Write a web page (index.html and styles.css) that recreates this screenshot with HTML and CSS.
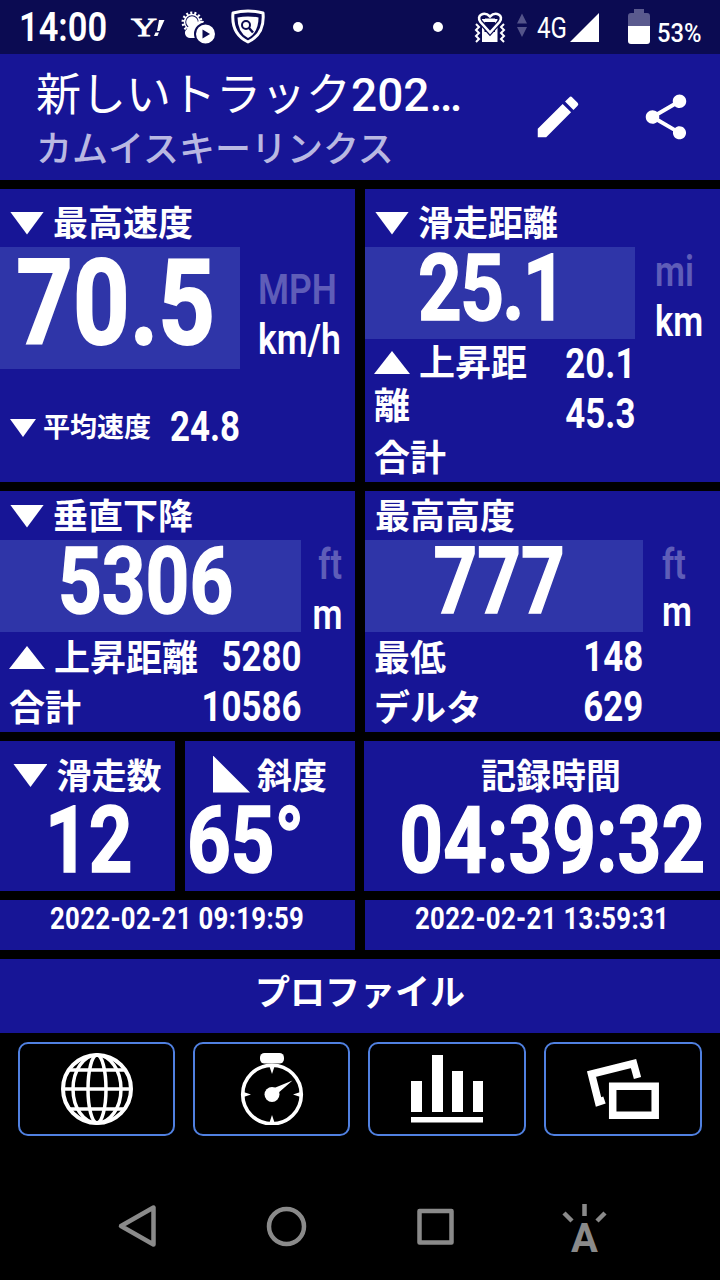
FILE: index.html
```html
<!DOCTYPE html>
<html lang="ja">
<head>
  <meta charset="UTF-8">
  <meta name="viewport" content="width=device-width, initial-scale=1.0">
  <title>カムイスキーリンクス</title>
  <link rel="stylesheet" href="styles.css">
</head>
<body>
  <div class="status-bar">
    <span class="clock">14:00</span>
    <svg class="notifications" width="180" height="54" viewBox="130 0 180 54">
      <!-- mail -->
      <text class="yahoo" x="131" y="36" textLength="26" lengthAdjust="spacingAndGlyphs">Y</text>
      <path d="M159 20h5.500l-5 11h-2.500zM155.500 32.500h3.500l-1.500 3.500h-3.500z" fill="#fff"/>
      <!-- weather -->
      <circle cx="192" cy="22" r="9" fill="none" stroke="#fff" stroke-width="3" stroke-dasharray="2 2.040"/>
      <circle cx="192" cy="22" r="7.500" fill="none" stroke="#fff" stroke-width="1.500"/>
      <circle cx="192" cy="22" r="5.800" fill="#fff"/>
      <path d="M190 38a5 5 0 0 1-3-9 7 7 0 0 1 8-5 9 9 0 0 1 9-3l-6 17z" fill="#fff"/>
      <circle cx="205.500" cy="34" r="10.500" fill="#fff" stroke="#0b0b52" stroke-width="2"/>
      <path d="M202.500 29.500v9l7.500-4.500z" fill="#0b0b52"/>
      <!-- shield -->
      <path d="M233 13q15-4 30 0q2 21-15 29q-17-8-15-29z" fill="none" stroke="#fff" stroke-width="3" stroke-linejoin="round"/>
      <path d="M237.500 17.500q10.500-2 21 0q0 15-10.500 20.500q-10.500-5.500-10.500-20.500z" fill="#fff"/>
      <circle cx="246" cy="25" r="4" fill="none" stroke="#0b0b52" stroke-width="2"/>
      <path d="M249 28l4 4.500" stroke="#0b0b52" stroke-width="2.500"/>
      <circle cx="298" cy="27" r="5" fill="#fff"/>
    </svg>
    <svg class="signals" width="100" height="54" viewBox="430 0 100 54">
      <circle cx="438" cy="27" r="5" fill="#fff"/>
      <!-- vibrate -->
      <path d="M482 19h15.500v23H482z" fill="#fff"/>
      <path d="M484.500 22h10.500v10h-10.500z" fill="#0b0b52"/>
      <path d="M490 32.500l-9.500-10.500c-5-7 4-11 9.500-5.500c5.500-5.500 14.500-1.500 9.500 5.500z" fill="none" stroke="#0b0b52" stroke-width="5"/>
      <path d="M490 32.500l-9.500-10.500c-5-7 4-11 9.500-5.500c5.500-5.500 14.500-1.500 9.500 5.500z" fill="none" stroke="#fff" stroke-width="2.600"/>
      <path d="M485 19.500h10" stroke="#fff" stroke-width="2"/>
      <path d="M476 24l3 3-3 3 3 3-3 3 3 3-3 3M504 24l-3 3 3 3-3 3 3 3-3 3 3 3" fill="none" stroke="#fff" stroke-width="2"/>
      <path d="M517 23.500l5-10 5 10zM517 27l5 10 5-10z" fill="#54548a"/>
    </svg>
    <span class="network">4G</span>
    <svg class="cell" width="29" height="29" viewBox="0 0 29 29"><path d="M0 29L29 0v29z" fill="#fff"/></svg>
    <svg class="battery" width="22" height="36" viewBox="0 0 22 36">
      <path d="M6 0h10v4h3q3 0 3 3v10H0V7q0-3 3-3h3z" fill="#5a5a8e"/>
      <path d="M0 17h22v15q0 3-3 3H3q-3 0-3-3z" fill="#fff"/>
    </svg>
    <span class="percent">53%</span>
  </div>

  <header class="header">
    <div class="titles">
      <h1>新しいトラック<span>202…</span></h1>
      <p>カムイスキーリンクス</p>
    </div>
    <svg class="action" viewBox="0 0 24 24"><path d="M3 17.250V21h3.750L17.810 9.940l-3.750-3.750L3 17.250zM20.710 7.040a1 1 0 0 0 0-1.410l-2.340-2.340a1 1 0 0 0-1.410 0l-1.830 1.830 3.750 3.750 1.830-1.830z"/></svg>
    <svg class="action" viewBox="0 0 24 24"><path d="M18 16.080c-.76 0-1.440.3-1.960.77L8.910 12.700c.05-.23.09-.46.09-.7s-.04-.47-.09-.7l7.050-4.110c.54.5 1.250.81 2.040.81 1.660 0 3-1.340 3-3s-1.340-3-3-3-3 1.340-3 3c0 .24.04.47.09.7L8.040 9.810C7.500 9.310 6.790 9 6 9c-1.660 0-3 1.340-3 3s1.340 3 3 3c.79 0 1.500-.31 2.040-.81l7.120 4.160c-.05.21-.08.43-.08.65 0 1.610 1.310 2.920 2.920 2.920s2.920-1.310 2.920-2.920-1.310-2.920-2.920-2.920z"/></svg>
  </header>

  <main class="stats">
    <section class="card speed">
      <h2 class="label"><i class="down"></i>最高速度</h2>
      <div class="main-row">
        <div class="value"><span class="num">70.5</span></div>
        <div class="units"><span class="off">MPH</span><span>km/h</span></div>
      </div>
      <div class="average">
        <span class="small-label"><i class="down small"></i>平均速度</span>
        <span class="num">24.8</span>
      </div>
    </section>

    <section class="card distance">
      <h2 class="label"><i class="down"></i>滑走距離</h2>
      <div class="main-row">
        <div class="value"><span class="num">25.1</span></div>
        <div class="units"><span class="off">mi</span><span>km</span></div>
      </div>
      <div class="details">
        <div class="names">
          <p class="wrapped"><i class="up"></i>上昇距離</p>
          <p class="total">合計</p>
        </div>
        <div class="amounts"><span class="num">20.1</span><span class="num">45.3</span></div>
      </div>
    </section>

    <section class="card vertical">
      <h2 class="label"><i class="down"></i>垂直下降</h2>
      <div class="main-row">
        <div class="value"><span class="num">5306</span></div>
        <div class="units"><span class="off">ft</span><span>m</span></div>
      </div>
      <div class="details">
        <div class="names"><p><i class="up"></i>上昇距離</p><p>合計</p></div>
        <div class="amounts"><span class="num">5280</span><span class="num">10586</span></div>
      </div>
    </section>

    <section class="card altitude">
      <h2 class="label">最高高度</h2>
      <div class="main-row">
        <div class="value"><span class="num">777</span></div>
        <div class="units"><span class="off">ft</span><span>m</span></div>
      </div>
      <div class="details">
        <div class="names"><p>最低</p><p>デルタ</p></div>
        <div class="amounts"><span class="num">148</span><span class="num">629</span></div>
      </div>
    </section>
  </main>

  <div class="summary">
    <section class="card runs">
      <h2 class="label"><i class="down"></i>滑走数</h2>
      <div class="value"><span class="num">12</span></div>
    </section>
    <section class="card slope">
      <h2 class="label"><i class="incline"></i>斜度</h2>
      <div class="value"><span class="num">65°</span></div>
    </section>
    <section class="card time">
      <h2 class="label">記録時間</h2>
      <div class="value"><span class="num">04:39:32</span></div>
    </section>
  </div>

  <div class="dates">
    <div class="card date"><span class="num">2022-02-21 09:19:59</span></div>
    <div class="card date"><span class="num">2022-02-21 13:59:31</span></div>
  </div>

  <div class="card profile">プロファイル</div>

  <nav class="tools">
    <button>
      <svg width="72" height="72" viewBox="0 0 72 72" fill="none" stroke="#fff" stroke-width="4">
        <circle cx="36" cy="36" r="34"/>
        <ellipse cx="36" cy="36" rx="24" ry="34" stroke-width="3.500"/>
        <ellipse cx="36" cy="36" rx="9" ry="34" stroke-width="3.500"/>
        <path d="M2 36h68M8 17h56M8 56h56" stroke-width="3.500"/>
      </svg>
    </button>
    <button>
      <svg width="64" height="72" viewBox="0 0 64 72">
        <rect x="20" y="0" width="24" height="10.500" rx="4.500" fill="#fff"/>
        <circle cx="32" cy="41.500" r="29.300" fill="none" stroke="#fff" stroke-width="3.600"/>
        <circle cx="32" cy="41.500" r="7.500" fill="#fff"/>
        <path d="M33 35.500L52.500 27.500 37 41zM29 12h6l-3 9zM29 71h6l-3-9zM2 38.500v6l9-3zM62 38.500v6l-9-3z" fill="#fff"/>
      </svg>
    </button>
    <button>
      <svg width="72" height="68" viewBox="0 0 72 68" fill="#fff">
        <path d="M0 26h11v31H0zM21 0h11v57H21zM41 16h11v41H41zM62 26h10v31H62zM0 62h72v5.500H0z"/>
      </svg>
    </button>
    <button>
      <svg width="72" height="62" viewBox="0 0 72 62" fill="none" stroke="#fff" stroke-width="7.500">
        <path d="M50.500 20L46.500 5.500 4.500 16l7 28 6-2"/>
        <path d="M25.700 28.200h42.500v29H25.700z"/>
      </svg>
    </button>
  </nav>

  <footer class="nav-bar">
    <svg width="520" height="70" viewBox="100 1196 520 70" fill="none" stroke="#8a8a8a" stroke-width="4.500" stroke-linejoin="round">
      <path d="M153.500 1207.500v37l-32.500-18.500z"/>
      <circle cx="286.500" cy="1226.500" r="17.500"/>
      <path d="M419.500 1211h32v31.500h-32z"/>
      <path d="M584.500 1204v12M564 1213l8 8M605 1213l-8 8"/>
      <text class="nav-letter" x="584.500" y="1252">A</text>
    </svg>
  </footer>
</body>
</html>
```
FILE: styles.css
```css
* {
  box-sizing: border-box;
  margin: 0;
  padding: 0;
}

body {
  width: 720px;
  height: 1280px;
  overflow: hidden;
  background: #000;
  color: #fff;
  font-family: Roboto, "Noto Sans CJK JP", sans-serif;
}

/* status bar */
.status-bar {
  display: flex;
  height: 54px;
  background: #0b0b52;
}

.status-bar span,
.status-bar svg {
  flex: none;
}

.clock {
  width: 111px;
  margin-left: 19px;
  font-size: 41px;
  line-height: 54px;
  font-weight: 600;
  transform: scaleX(0.84);
  transform-origin: left;
}

.yahoo {
  font-family: "Liberation Serif", serif;
  font-size: 26px;
  font-weight: 400;
  fill: #fff;
  stroke: #fff;
  stroke-width: 0.8px;
}

.signals {
  margin-left: 120px;
}

.network {
  width: 33px;
  margin-left: 7px;
  font-size: 29px;
  line-height: 56px;
  transform: scaleX(0.83);
  transform-origin: left;
}

.cell {
  margin-top: 13px;
}

.battery {
  margin: 9px 7px 0 29px;
}

.percent {
  font-size: 25px;
  line-height: 67px;
  font-weight: 500;
  transform: scaleX(0.95);
  transform-origin: left;
}

/* header */
.header {
  display: flex;
  align-items: center;
  height: 126px;
  background: #171596;
}

.titles {
  width: 531px;
  padding-left: 36px;
}

.titles h1 {
  height: 74px;
  padding-top: 4px;
  font-size: 45px;
  line-height: 72px;
  font-weight: 400;
  white-space: nowrap;
}

.titles h1 span {
  font-size: 46px;
  font-weight: 500;
}

.titles p {
  height: 50px;
  font-size: 36px;
  line-height: 42px;
  font-weight: 500;
  color: #b9b8e2;
}

.action {
  width: 54px;
  height: 54px;
  fill: #fff;
}

.action + .action {
  margin-left: 54px;
}

/* cards */
.stats {
  display: grid;
  grid-template-columns: 355px 355px;
  grid-template-rows: 293px 241px;
  gap: 9px 10px;
  margin-top: 9px;
}

.card {
  background: #171596;
}

.label {
  display: flex;
  align-items: center;
  height: 49px;
  padding-top: 4px;
  padding-left: 10px;
  font-size: 35px;
  line-height: 45px;
  font-weight: 700;
}

.speed .label,
.distance .label {
  height: 58px;
  padding-top: 13px;
}

.down,
.up,
.incline {
  display: inline-block;
  flex: none;
  width: 34px;
  height: 23px;
  margin-right: 9px;
  background: #fff;
  clip-path: polygon(0 0, 100% 0, 50% 100%);
}

.label .down {
  margin-top: -3px;
}

.up {
  width: 36px;
  vertical-align: 2px;
  clip-path: polygon(50% 0, 100% 100%, 0 100%);
}

.small {
  width: 26px;
  height: 18px;
  margin-right: 7px;
}

.incline {
  width: 37px;
  height: 37px;
  margin-top: -6px;
  margin-right: 7px;
  clip-path: polygon(0 0, 100% 100%, 0 100%);
}

.num {
  display: inline-block;
  font-weight: 700;
  white-space: nowrap;
  transform: scaleX(0.83);
}

.main-row {
  display: flex;
  height: 92px;
}

.speed .main-row {
  height: 122px;
}

.value {
  display: flex;
  flex: none;
  justify-content: center;
  width: 301px;
  height: 92px;
  padding-right: 9px;
  background: #2f35a8;
  font-size: 92px;
  line-height: 84px;
  -webkit-text-stroke: 1.5px #fff;
}

.speed .value {
  width: 240px;
  height: 122px;
  padding-right: 9px;
  font-size: 119px;
  line-height: 113px;
  -webkit-text-stroke-width: 2px;
}

.distance .value {
  width: 270px;
  padding-right: 16px;
  letter-spacing: -2px;
}

.altitude .value {
  width: 278px;
}

.units {
  display: flex;
  flex-direction: column;
  padding-left: 20px;
  font-size: 42px;
  line-height: 50px;
  font-weight: 600;
}

.units span {
  transform: scaleX(0.82);
  transform-origin: left;
}

.units .off {
  color: #5f5db8;
}

.speed .units {
  padding-top: 18px;
  padding-left: 18px;
}

.speed .units span {
  transform: scaleX(0.845);
}

.vertical .units {
  width: 41px;
  padding-left: 0;
  align-items: flex-end;
}

.vertical .units span {
  transform-origin: right;
}

.altitude .units {
  padding-top: 1px;
  padding-left: 19px;
  line-height: 47px;
}

.average {
  display: flex;
  align-items: center;
  width: 240px;
  margin-top: 32px;
  padding-left: 10px;
  font-size: 42px;
  line-height: 50px;
}

.small-label {
  display: flex;
  flex: none;
  align-items: center;
  padding-top: 2px;
  font-size: 27px;
  font-weight: 700;
}

.average .num {
  margin-left: 19px;
  transform-origin: left;
}

.details {
  display: flex;
  justify-content: space-between;
  width: 301px;
  padding-left: 9px;
  font-size: 36px;
  line-height: 50px;
  font-weight: 700;
}

.distance .details {
  width: 270px;
}

.altitude .details {
  width: 278px;
}

.names {
  padding-top: 2px;
}

.distance .names {
  width: 160px;
}

.wrapped {
  padding-top: 2px;
  line-height: 43px;
  word-break: break-all;
}

.total {
  line-height: 60px;
}

.amounts {
  display: flex;
  flex: 1;
  flex-direction: column;
  align-items: flex-end;
  width: 0;
  font-size: 42px;
}

.amounts .num {
  transform-origin: right;
}

/* runs, slope and time */
.summary {
  display: flex;
  height: 150px;
  margin-top: 9px;
}

.summary .label {
  justify-content: center;
  height: 58px;
  padding: 14px 0 0;
}

.summary .value {
  width: auto;
  background: none;
}

.runs {
  width: 175px;
}

.slope {
  width: 170px;
  margin-left: 10px;
}

.time {
  width: 356px;
  margin-left: 9px;
}

.runs .value {
  padding: 0 0 0 2px;
}

.slope .value {
  justify-content: flex-start;
  padding: 0 0 0 2px;
}

.slope .num {
  transform-origin: left;
}

.time .value {
  padding: 0 0 0 20px;
}

.summary .time .label {
  padding-left: 18px;
}

/* start and end dates */
.dates {
  display: flex;
  gap: 10px;
  height: 50px;
  margin-top: 9px;
}

.date {
  display: flex;
  flex: 1;
  justify-content: center;
  font-size: 31px;
  line-height: 38px;
  letter-spacing: 0.4px;
}

.profile {
  height: 74px;
  margin-top: 9px;
  font-size: 35px;
  line-height: 70px;
  font-weight: 600;
  text-align: center;
}

/* bottom buttons */
.tools {
  display: grid;
  grid-template-columns: 157px 157px 158px 158px;
  gap: 18px;
  margin-top: 9px;
  padding: 0 18px;
}

.tools button {
  display: flex;
  align-items: center;
  justify-content: center;
  height: 94px;
  border: 2px solid #5080e0;
  border-radius: 10px;
  background: #000;
}

.nav-bar {
  padding: 60px 0 0 100px;
}

.nav-letter {
  font-size: 40px;
  font-weight: 700;
  fill: #8a8a8a;
  stroke: none;
  text-anchor: middle;
}
```
